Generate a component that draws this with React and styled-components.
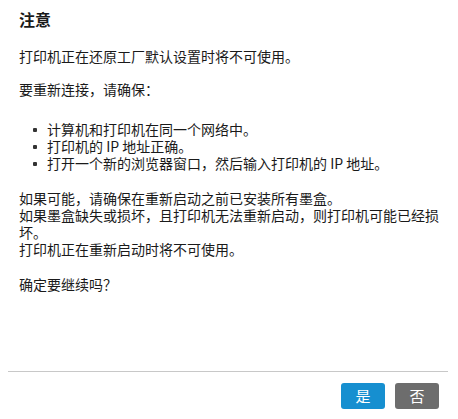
import styled, { createGlobalStyle } from 'styled-components'

const GlobalStyle = createGlobalStyle`
  html, body {
    margin: 0;
    padding: 0;
    background: #fff;
  }
  body {
    font-family: "Noto Sans CJK SC", "Liberation Sans", sans-serif;
    color: #1a1a1a;
  }
`

const Dialog = styled.div`
  width: 458px;
  height: 419px;
  display: flex;
  flex-direction: column;
  box-sizing: border-box;
`

const Body = styled.div`
  flex: 1;
  padding: 9px 19px 0 19px;
  font-size: 14px;
  line-height: 17px;
`

const Title = styled.h1`
  margin: 0 0 19px 0;
  font-size: 16px;
  line-height: 20px;
  font-weight: bold;
`

const Para = styled.p`
  margin: 0 0 ${p => p.$gap || 16}px 0;
`

const List = styled.ul`
  list-style: none;
  margin: 0 0 18px 0;
  padding: 0 0 0 28px;
`

const Item = styled.li`
  position: relative;
  &::before {
    content: '';
    position: absolute;
    left: -14px;
    top: 7px;
    width: 4px;
    height: 4px;
    border-radius: 1px;
    background: #333;
  }
`

const Footer = styled.div`
  display: flex;
  flex-direction: column;
  padding-bottom: 10px;
`

const Divider = styled.div`
  height: 1px;
  background: #c8c8c8;
  margin: 0 10px 11px 8px;
`

const Buttons = styled.div`
  display: flex;
  justify-content: flex-end;
  gap: 10px;
  padding-right: 19px;
`

const Button = styled.button`
  width: 44px;
  height: 26px;
  border: none;
  border-radius: 3px;
  padding: 0;
  color: #fff;
  font-family: "Noto Sans CJK SC", sans-serif;
  font-size: 15px;
  line-height: 26px;
  background: ${p => (p.$primary ? '#168fd0' : '#6d6d6d')};
  cursor: pointer;
`

export default function App () {
  return (
    <>
      <GlobalStyle />
      <Dialog>
        <Body>
          <Title>注意</Title>
          <Para>打印机正在还原工厂默认设置时将不可使用。</Para>
          <Para $gap={23}>要重新连接，请确保：</Para>
          <List>
            <Item>计算机和打印机在同一个网络中。</Item>
            <Item>打印机的 IP 地址正确。</Item>
            <Item>打开一个新的浏览器窗口，然后输入打印机的 IP 地址。</Item>
          </List>
          <Para $gap={18}>
            如果可能，请确保在重新启动之前已安装所有墨盒。<br />
            如果墨盒缺失或损坏，且打印机无法重新启动，则打印机可能已经损坏。<br />
            打印机正在重新启动时将不可使用。
          </Para>
          <Para>确定要继续吗？</Para>
        </Body>
        <Footer>
          <Divider />
          <Buttons>
            <Button $primary>是</Button>
            <Button>否</Button>
          </Buttons>
        </Footer>
      </Dialog>
    </>
  )
}
